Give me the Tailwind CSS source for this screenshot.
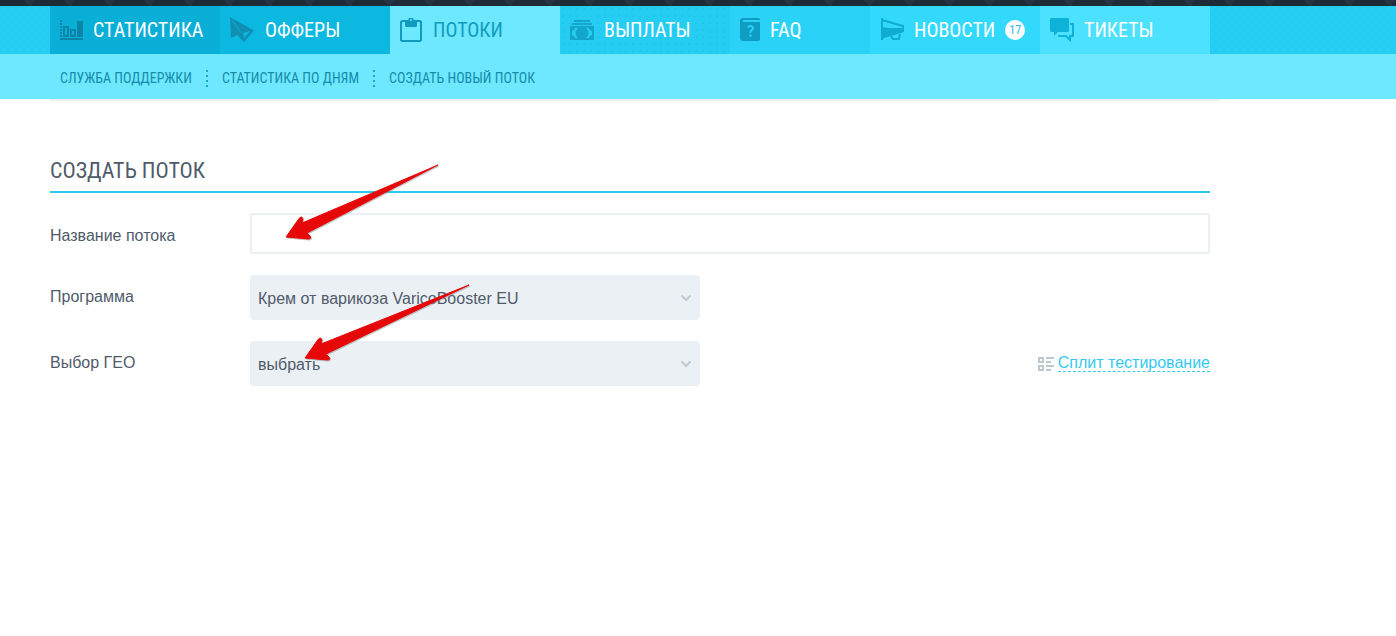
<!DOCTYPE html>
<html lang="ru">
<head>
    <meta charset="utf-8">
    <meta name="viewport" content="width=device-width, initial-scale=1">
    <title>Создать поток</title>
    <script src="https://cdn.jsdelivr.net/npm/@tailwindcss/browser@4"></script>
</head>
<body class="relative min-h-screen bg-white font-['Liberation_Sans',Arial,sans-serif] text-base text-[#4f5b6b]">
    <header class="font-['Roboto_Condensed','Liberation_Sans_Narrow',Roboto,sans-serif] uppercase">
        <!-- Dark strip with diamonds -->
        <div class="h-[6px] bg-[#1e2a36] bg-[conic-gradient(from_315deg_at_50%_100%,#253443_90deg,transparent_0)] bg-[length:40px_6px] bg-[position:10px_0]"></div>

        <!-- Main menu -->
        <nav class="bg-[#26cdf3] bg-[radial-gradient(circle,#2bd0f5_1px,transparent_1px)] bg-[length:8px_8px] px-[50px]">
            <div class="grid h-12 max-w-[1160px] grid-cols-[170px_170px_170px_170px_140px_170px_170px] text-xl leading-12 text-white">
                <a href="#" class="flex items-center gap-[9px] bg-[#09afd7] pl-[10px]">
                    <svg class="h-6 w-6 shrink-0 text-[#0c86a8]" viewBox="0 0 24 24" fill="none" stroke="currentColor" stroke-width="2" shape-rendering="crispEdges">
                        <path d="M1 2v18" stroke-dasharray="2 1"/>
                        <path d="M4 9h4v9H4zM11 12h4v6h-4z"/>
                        <path d="M17 3h6v16h-6z" fill="currentColor" stroke="none"/>
                        <path d="M0 21h23"/>
                    </svg>
                    Статистика
                </a>
                <a href="#" class="flex items-center gap-[11px] bg-[#0bb9e0] pl-[10px]">
                    <svg class="h-6 w-6 shrink-0 overflow-visible text-[#118fb2]" viewBox="0 0 24 24" fill="currentColor">
                        <path d="M0 -1L24 12.500L14 24L7 17L1 20z"/>
                        <path d="M13 15L20 13L14 20.500z" fill="#0bb9e0"/>
                        <path d="M2 2L11 15" fill="none" stroke="#0bb9e0" stroke-width=".7"/>
                    </svg>
                    Офферы
                </a>
                <a href="#" class="flex items-center gap-[9px] bg-[#6de8ff] pl-[10px] text-[#129bbf]">
                    <svg class="h-6 w-6 shrink-0 overflow-visible" viewBox="0 0 24 24" fill="none" stroke="currentColor" stroke-width="2">
                        <path d="M5 3H2L1 4v18l1 1h18l1-1V4l-1-1h-3"/>
                        <path d="M5 2h3l1-2h4l1 2h3v6l-1 1H6L5 8z" fill="currentColor" stroke="none"/>
                        <circle cx="11" cy="2" r="1" fill="#6de8ff" stroke="none"/>
                    </svg>
                    Потоки
                </a>
                <a href="#" class="flex items-center gap-[10px] bg-[#26cdf3] bg-[radial-gradient(circle,#1fc6ec_1px,transparent_1px)] bg-[length:7px_7px] pl-[10px]">
                    <svg class="h-6 w-6 shrink-0 text-[#13a5ca]" viewBox="0 0 24 24" fill="currentColor">
                        <path d="M4 2h16v2H4zM2 5h20v2H2zM0 8h24v14H0z"/>
                        <path d="M2 13q3-1 3-3h3q-5 5 0 10H5q0-2-3-3zM22 13q-3-1-3-3h-3q5 5 0 10h3q0-2 3-3z" fill="#26cdf3"/>
                    </svg>
                    Выплаты
                </a>
                <a href="#" class="flex items-center gap-[10px] bg-[#2bd2f8] pl-[10px]">
                    <svg class="h-6 w-5 shrink-0 text-[#109dc3]" viewBox="0 0 20 24" fill="currentColor">
                        <path d="M2 0h17l1 1v1H3v2h17v18l-1 1H2l-2-2V2z"/>
                        <path d="M8 9.500q.500-1.500 2.500-1.500T13 10q0 1.200-1.500 2.200T10.300 15" fill="none" stroke="#2bd2f8" stroke-width="2"/>
                        <path d="M9.200 16.500h2.300v2H9.200z" fill="#2bd2f8"/>
                    </svg>
                    FAQ
                </a>
                <a href="#" class="flex items-center gap-[10px] bg-[#33d9fc] pl-[10px]">
                    <svg class="h-6 w-6 shrink-0 text-[#0eabd2]" viewBox="0 0 24 24" fill="none" stroke="currentColor" stroke-width="2">
                        <path d="M2 0v22M2 2l21 6v6"/>
                        <path d="M1 9l9 1h14v4L1 21z" fill="currentColor" stroke="none"/>
                        <path d="M11 18l2 3h6l1-5"/>
                    </svg>
                    Новости
                    <span class="flex h-5 w-5 items-center justify-center rounded-full bg-white text-xs text-[#26bfe4]">17</span>
                </a>
                <a href="#" class="flex items-center gap-[10px] bg-[#4be1ff] pl-[10px]">
                    <svg class="h-6 w-6 shrink-0 text-[#0eb2d9]" viewBox="0 0 24 24" fill="none" stroke="currentColor" stroke-width="2">
                        <path d="M1 0h17l1 1v12l-1 1H8l-4 4v-4H1l-1-1V1z" fill="currentColor" stroke="none"/>
                        <path d="M20 6h3v12h-3v4l-4-4H8"/>
                    </svg>
                    Тикеты
                </a>
            </div>
        </nav>

        <!-- Sub menu -->
        <nav class="bg-[#6de8ff] px-[60px]">
            <div class="flex h-[45px] items-center gap-[14px] pt-[3px] text-sm text-[#168cac]">
                <a href="#">Служба поддержки</a>
                <span class="h-[17px] w-[2px] bg-[linear-gradient(#16a9cf_2px,transparent_2px)] bg-[length:2px_5px]"></span>
                <a href="#">Статистика по дням</a>
                <span class="h-[17px] w-[2px] bg-[linear-gradient(#16a9cf_2px,transparent_2px)] bg-[length:2px_5px]"></span>
                <a href="#">Создать новый поток</a>
            </div>
        </nav>
    </header>

    <main class="px-[50px]">
        <div class="-mr-[10px] h-[2px] max-w-[1170px] bg-[#ebefef]"></div>
        <form class="max-w-[1160px] pt-[54px]">
            <h1 class="mb-5 border-b-2 border-[#2fc8f0] pb-1 font-['Roboto_Condensed','Liberation_Sans_Narrow',Roboto,sans-serif] text-[22px] leading-8 uppercase">Создать поток</h1>

            <div class="mb-[21px] flex items-center">
                <label for="name" class="w-[200px] shrink-0 pt-1">Название потока</label>
                <input id="name" type="text" class="h-[41px] min-w-0 flex-1 rounded-xs border-2 border-[#ebf0f4] bg-white px-2 outline-none">
            </div>

            <div class="mb-[21px] flex items-center">
                <label for="program" class="w-[200px] shrink-0 pb-[2px]">Программа</label>
                <div class="relative w-[450px]">
                    <select id="program" class="h-[45px] w-full appearance-none rounded bg-[#ebf0f4] px-2 pt-[2px] outline-none">
                        <option>Крем от варикоза VaricoBooster EU</option>
                    </select>
                    <svg class="pointer-events-none absolute top-[18px] right-2 h-[10px] w-3 text-[#bfcad2]" viewBox="0 0 12 10" fill="none" stroke="currentColor" stroke-width="2"><path d="M1.500 2.500L6 7l4.500-4.500"/></svg>
                </div>
            </div>

            <div class="flex items-center">
                <label for="geo" class="w-[200px] shrink-0 pb-[2px]">Выбор ГЕО</label>
                <div class="relative w-[450px]">
                    <select id="geo" class="h-[45px] w-full appearance-none rounded bg-[#ebf0f4] px-2 pt-[2px] outline-none">
                        <option>выбрать</option>
                    </select>
                    <svg class="pointer-events-none absolute top-[18px] right-2 h-[10px] w-3 text-[#bfcad2]" viewBox="0 0 12 10" fill="none" stroke="currentColor" stroke-width="2"><path d="M1.500 2.500L6 7l4.500-4.500"/></svg>
                </div>
                <a href="#" class="ml-auto flex items-center gap-1 text-[#35c9f0]">
                    <svg class="h-4 w-4 text-[#bdc9d1]" viewBox="0 0 16 16" fill="none" stroke="currentColor" stroke-width="2" shape-rendering="crispEdges"><path d="M1 2h4v4H1zM1 10h4v4H1zM8 2h8M8 6h5M8 10h8M8 14h5"/></svg>
                    <span class="border-b border-dashed border-[#35c9f0] leading-4">Сплит тестирование</span>
                </a>
            </div>
        </form>
    </main>

    <!-- Hint arrows over the form -->
    <svg class="pointer-events-none absolute top-[160px] left-[280px] h-[210px] w-[195px]" viewBox="280 160 195 210" fill="#e60808" stroke="#e60808" stroke-width="1" stroke-linejoin="round" aria-hidden="true">
        <g fill="#8a8a8a" stroke="#8a8a8a" opacity=".5" transform="translate(1 1)">
            <path d="M438 165L302 223q2-6-1-6-1 0-3 3L286 237l22 2q4 0 2-3l-3-3Z"/>
            <path d="M469 285L321 344q2-6-1-6-1 0-3 3L305 358l22 2q4 0 2-3l-3-3Z"/>
        </g>
        <path d="M438 165L302 223q2-6-1-6-1 0-3 3L286 237l22 2q4 0 2-3l-3-3Z"/>
        <path d="M469 285L321 344q2-6-1-6-1 0-3 3L305 358l22 2q4 0 2-3l-3-3Z"/>
    </svg>
</body>
</html>
